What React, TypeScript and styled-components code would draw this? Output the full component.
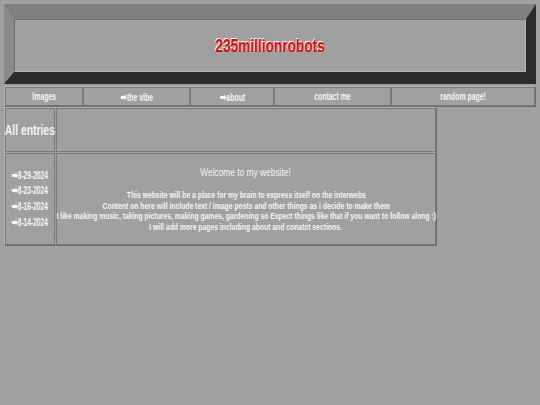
import React from 'react';
import styled, { createGlobalStyle } from 'styled-components';

const GlobalStyle = createGlobalStyle`
    html, body {
        margin: 0;
        padding: 0;
        background: #a0a0a0;
    }
    body {
        padding: 4px;
        font-family: "Liberation Sans", Arial, sans-serif;
        color: #f4f4f4;
    }
`;

// the page uses a narrow face; squeeze Arial-metric text horizontally
const Narrow = styled.span<{ $scale?: number }>`
    display: inline-block;
    white-space: nowrap;
    transform: scaleX(${(p) => p.$scale ?? 0.76});
    transform-origin: center;
`;

const Header = styled.div`
    border-style: solid;
    border-width: 15px 10px 12px 10px;
    border-color: #808080 #2b2b2b #2b2b2b #8a8a8a;
    height: 53px;
    display: flex;
`;

const HeaderInner = styled.div`
    flex: 1;
    border: 1px solid;
    border-color: #707070 #b6b6b6 #b6b6b6 #707070;
    display: flex;
    align-items: center;
    justify-content: center;
`;

const Title = styled.h1`
    margin: 0;
    font-size: 19px;
    font-weight: bold;
    color: #d81010;
    text-shadow: -1px -1px 0 #ffffff;
`;

const Nav = styled.div`
    margin-top: 2px;
    display: grid;
    grid-template-columns: 78px 107px 84px 117px 1fr;
    border: 1px solid;
    border-color: #b4b4b4 #6c6c6c #6c6c6c #b4b4b4;
`;

const NavItem = styled.div`
    height: 17px;
    border: 1px solid #7a7a7a;
    display: flex;
    align-items: center;
    justify-content: center;
    font-size: 10px;
    font-weight: bold;
`;

const Arrow = styled.span`
    font-family: "DejaVu Sans", sans-serif;
    font-weight: bold;
    font-size: 1.15em;
    color: #ffffff;
`;

const Entries = styled.div`
    width: 431px;
    display: grid;
    grid-template-columns: 50px minmax(0, 1fr);
    grid-template-rows: 44px 92px;
    gap: 1px;
    border: 1px solid;
    border-color: #b4b4b4 #6c6c6c #6c6c6c #b4b4b4;
`;

const Cell = styled.div`
    min-width: 0;
    border: 1px solid #7a7a7a;
    display: flex;
    flex-direction: column;
    align-items: center;
    justify-content: center;
    text-align: center;
`;

const EntriesLabel = styled.div`
    font-size: 14px;
    font-weight: bold;
`;

const DateLink = styled.div`
    font-size: 10px;
    font-weight: bold;
    line-height: 14.7px;
`;

const Welcome = styled.div`
    font-size: 11px;
    line-height: 13px;
    margin-bottom: 11px;
`;

const Line = styled.div`
    font-size: 9px;
    font-weight: bold;
    line-height: 10.5px;
`;

const navItems = [
    { label: 'Images', arrow: false },
    { label: 'the vibe', arrow: true },
    { label: 'about', arrow: true },
    { label: 'contact me', arrow: false },
    { label: 'random page!', arrow: false },
];

const dates = ['8-29-2024', '8-23-2024', '8-16-2024', '8-14-2024'];

const lines = [
    'This website will be a place for my brain to express itself on the interwebs',
    'Content on here will include text / image posts and other things as i decide to make them',
    'I like making music, taking pictures, making games, gardening so Expect things like that if you want to follow along :)',
    'I will add more pages including about and conatct sections.',
];

const App = () => {
    return (
        <>
            <GlobalStyle />
            <Header>
                <HeaderInner>
                    <Title>
                        <Narrow $scale={0.72}>235millionrobots</Narrow>
                    </Title>
                </HeaderInner>
            </Header>
            <Nav>
                {navItems.map((item) => (
                    <NavItem key={item.label}>
                        <Narrow $scale={0.69}>
                            {item.arrow && <Arrow>➡</Arrow>}
                            {item.label}
                        </Narrow>
                    </NavItem>
                ))}
            </Nav>
            <Entries>
                <Cell>
                    <EntriesLabel>
                        <Narrow $scale={0.74}>All entries</Narrow>
                    </EntriesLabel>
                </Cell>
                <Cell />
                <Cell>
                    {dates.map((d) => (
                        <DateLink key={d}>
                            <Narrow $scale={0.66}>
                                <Arrow>➡</Arrow>
                                {d}
                            </Narrow>
                        </DateLink>
                    ))}
                </Cell>
                <Cell>
                    <Welcome>
                        <Narrow>Welcome to my website!</Narrow>
                    </Welcome>
                    {lines.map((l) => (
                        <Line key={l}>
                            <Narrow $scale={0.755}>{l}</Narrow>
                        </Line>
                    ))}
                </Cell>
            </Entries>
        </>
    );
};

export default App;
